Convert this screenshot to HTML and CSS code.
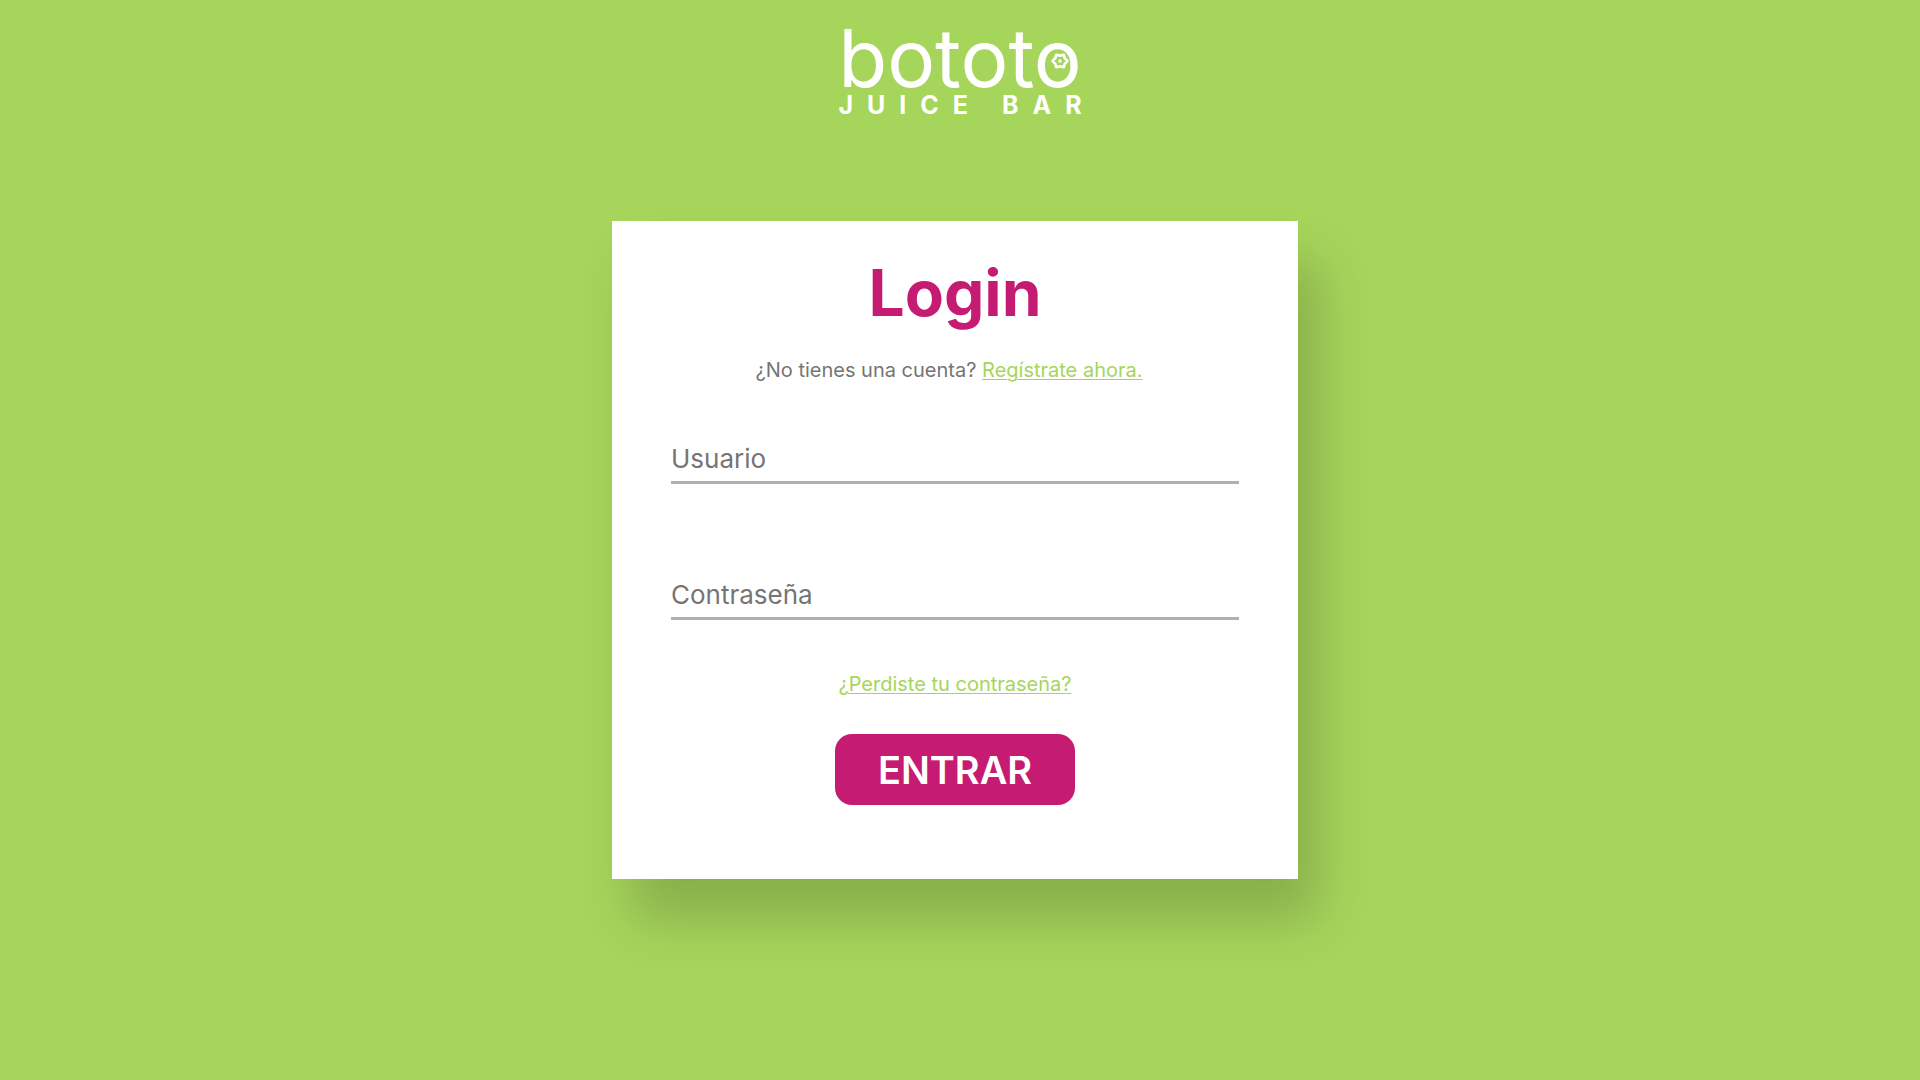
FILE: index.html
```html
<!DOCTYPE html>
<html lang="es">
<head>
<meta charset="utf-8">
<meta name="viewport" content="width=device-width, initial-scale=1">
<title>Bototo Juice Bar - Login</title>
<link rel="stylesheet" href="styles.css">
</head>
<body>
<header class="header">
  <div class="logo">
    <div class="logo-name">bototo<svg class="logo-flower" viewBox="0 0 18 18" aria-hidden="true">
        <path d="M15.6 9 L13.2 11.6 L12.4 14.6 L9 13.8 L5.6 14.6 L4.8 11.6 L2.4 9 L4.8 6.4 L5.6 3.4 L9 4.2 L12.4 3.4 L13.2 6.4 Z" fill="#a6d55b" stroke="#fff" stroke-width="2.4" stroke-linejoin="round"/>
        <circle cx="9" cy="9" r="1.6" fill="#fff"/>
      </svg></div>
    <div class="logo-tag">JUICE BAR</div>
  </div>
</header>
<main class="main">
  <form class="card">
    <h1 class="title">Login</h1>
    <p class="signup">¿No tienes una cuenta? <a class="link" href="#registro">Regístrate ahora.</a></p>
    <input class="field" type="text" name="usuario" placeholder="Usuario" aria-label="Usuario">
    <input class="field" type="password" name="contrasena" placeholder="Contraseña" aria-label="Contraseña">
    <a class="link forgot" href="#recuperar">¿Perdiste tu contraseña?</a>
    <button class="submit" type="submit">ENTRAR</button>
  </form>
</main>
</body>
</html>
```
FILE: styles.css
```css
* {
  box-sizing: border-box;
}

body {
  margin: 0;
  min-height: 100vh;
  background: #a6d55b;
  color: #757575;
  font-family: Inter, "Open Sans", sans-serif;
}

.header {
  display: flex;
  justify-content: center;
  padding-top: 20px;
}

.logo {
  display: flex;
  flex-direction: column;
  align-items: center;
  color: #fff;
}

.logo-name {
  position: relative;
  font-size: 80px;
  line-height: 76px;
}

.logo-flower {
  position: absolute;
  right: 12px;
  top: 31px;
  width: 20px;
  height: 20px;
}

.logo-tag {
  font-size: 25px;
  font-weight: 700;
  line-height: 18px;
  letter-spacing: 14px;
  margin-right: -14px;
}

.main {
  display: flex;
  justify-content: center;
  padding: 107px 10px 100px 0;
}

.card {
  display: flex;
  flex-direction: column;
  align-items: center;
  width: 686px;
  max-width: 100%;
  padding: 32px 59px 74px;
  background: #fff;
  box-shadow: 20px 40px 50px rgba(0, 0, 0, 0.18);
}

.title {
  margin: 0;
  color: #c51b72;
  font-size: 64px;
  font-weight: 700;
  line-height: 80px;
}

.signup {
  margin: 24px 12px 54px 0;
  font-size: 20px;
  line-height: 26px;
}

.link {
  color: #a6d55b;
  text-decoration-thickness: 1px;
  text-underline-offset: 2px;
}

.field {
  width: 100%;
  height: 47px;
  margin-bottom: 89px;
  padding: 0 0 1px;
  border: 0;
  border-bottom: 3px solid #afafaf;
  background: none;
  color: #757575;
  font: inherit;
  font-size: 26px;
  outline: none;
}

.field::placeholder {
  color: #757575;
  opacity: 1;
}

.field + .forgot {
  margin-top: -38px;
}

.forgot {
  margin-bottom: 37px;
  font-size: 20px;
  line-height: 26px;
}

.submit {
  width: 240px;
  height: 71px;
  border: 0;
  border-radius: 17px;
  background: #c51b72;
  color: #fff;
  font: inherit;
  font-size: 38px;
  font-weight: 600;
}
```
